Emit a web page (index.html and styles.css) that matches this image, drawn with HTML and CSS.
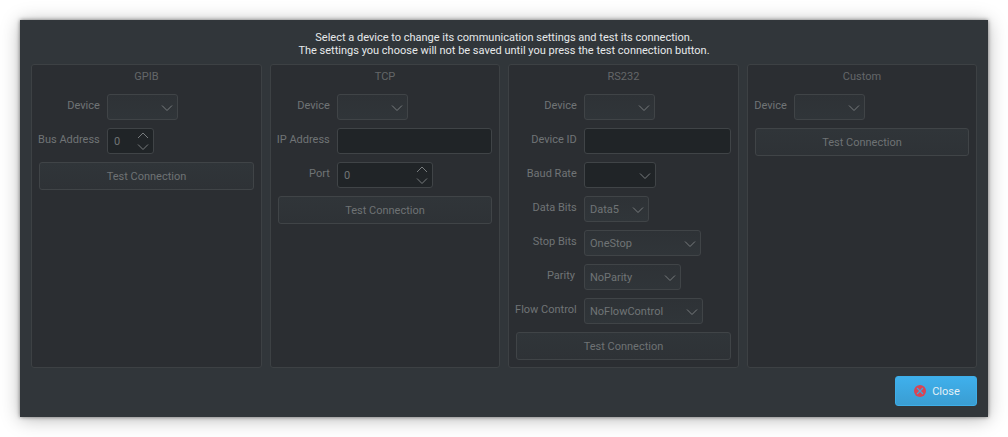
FILE: index.html
```html
<!DOCTYPE html>
<html lang="en">
<head>
<meta charset="utf-8">
<title>Device Communication</title>
<link rel="stylesheet" href="styles.css">
</head>
<body>
<svg class="defs" aria-hidden="true">
  <symbol id="down" viewBox="0 0 12 8"><path d="M1 1.5 6 6.5 11 1.5"/></symbol>
  <symbol id="up" viewBox="0 0 12 8"><path d="M1 6 6 1 11 6"/></symbol>
</svg>
<main class="dialog">
  <p class="intro">Select a device to change its communication settings and test its connection.<br>The settings you choose will not be saved until you press the test connection button.</p>
  <div class="panels">
    <section class="panel gpib">
      <h2 class="title">GPIB</h2>
      <div class="row"><span class="label">Device</span><div class="field combo device"><svg class="chev"><use href="#down"/></svg></div></div>
      <div class="row"><span class="label">Bus Address</span><div class="field spin bus"><span>0</span><span class="arrows"><svg class="chev"><use href="#up"/></svg><svg class="chev"><use href="#down"/></svg></span></div></div>
      <button class="test">Test Connection</button>
    </section>
    <section class="panel tcp">
      <h2 class="title">TCP</h2>
      <div class="row"><span class="label">Device</span><div class="field combo device"><svg class="chev"><use href="#down"/></svg></div></div>
      <div class="row"><span class="label">IP Address</span><div class="field entry"></div></div>
      <div class="row"><span class="label">Port</span><div class="field spin port"><span>0</span><span class="arrows"><svg class="chev"><use href="#up"/></svg><svg class="chev"><use href="#down"/></svg></span></div></div>
      <button class="test">Test Connection</button>
    </section>
    <section class="panel rs232">
      <h2 class="title">RS232</h2>
      <div class="row"><span class="label">Device</span><div class="field combo device"><svg class="chev"><use href="#down"/></svg></div></div>
      <div class="row"><span class="label">Device ID</span><div class="field entry"></div></div>
      <div class="row"><span class="label">Baud Rate</span><div class="field combo baud"><svg class="chev"><use href="#down"/></svg></div></div>
      <div class="row"><span class="label">Data Bits</span><div class="field combo databits"><span>Data5</span><svg class="chev"><use href="#down"/></svg></div></div>
      <div class="row"><span class="label">Stop Bits</span><div class="field combo stopbits"><span>OneStop</span><svg class="chev"><use href="#down"/></svg></div></div>
      <div class="row"><span class="label parity-label">Parity</span><div class="field combo parity"><span>NoParity</span><svg class="chev"><use href="#down"/></svg></div></div>
      <div class="row"><span class="label">Flow Control</span><div class="field combo flow"><span>NoFlowControl</span><svg class="chev"><use href="#down"/></svg></div></div>
      <button class="test">Test Connection</button>
    </section>
    <section class="panel custom">
      <h2 class="title">Custom</h2>
      <div class="row"><span class="label">Device</span><div class="field combo device"><svg class="chev"><use href="#down"/></svg></div></div>
      <button class="test">Test Connection</button>
    </section>
  </div>
  <button class="close"><svg class="close-icon" viewBox="0 0 12 12"><circle cx="6" cy="6" r="6"/><path d="M3 3 9 9M9 3 3 9"/></svg><span>Close</span></button>
</main>
</body>
</html>
```
FILE: styles.css
```css
* { box-sizing: border-box; }
body {
  margin: 0;
  padding: 20px;
  height: 437px;
  overflow: hidden;
  background: #fff;
  font: 11px/13px Roboto, sans-serif;
  color: #707476;
}
.defs { position: absolute; width: 0; height: 0; }
.dialog {
  display: flex;
  flex-direction: column;
  width: 968px;
  height: 397px;
  padding: 11px;
  background: #31363a;
  box-shadow: 0 2px 18px rgba(0, 0, 0, .28), 0 0 4px rgba(0, 0, 0, .5);
}
.intro { margin: 0 0 7px; text-align: center; color: #e6e9ea; }
.panels { display: grid; grid-template-columns: 231px 230px 231px 230px; column-gap: 8px; height: 304px; }
.panel {
  display: flex;
  flex-direction: column;
  gap: 8px;
  padding: 5px 7px;
  border: 1px solid #3d4144;
  border-radius: 3px;
  background: #2b2e32;
}
.tcp { --label: 59px; }
.gpib, .rs232 { --label: 68px; }
.custom { --label: 39px; }
.title { margin: 0 0 3px; font: inherit; text-align: center; color: #646769; }
.row { display: flex; height: 26px; }
.label {
  flex: none;
  display: flex;
  justify-content: flex-end;
  width: calc(var(--label) - 7.2px);
  margin-right: 7.2px;
  padding-top: 5px;
  white-space: nowrap;
}
.parity-label { padding-right: 1.8px; }
.field {
  display: flex;
  align-items: center;
  justify-content: space-between;
  height: 26px;
  padding: 1px 4px 0 5px;
  border: 1px solid #404447;
  border-radius: 3px;
  background: #202427;
}
.combo { background: linear-gradient(#2e3236, #303539); }
.combo > .chev { margin-left: auto; }
.baud { background: #202427; }
.entry { flex: 1; }
.device { width: 71px; }
.bus { width: 47px; }
.port { width: 96px; }
.baud { width: 72px; }
.databits { width: 65px; }
.stopbits { width: 117px; }
.parity { width: 97px; }
.flow { width: 119px; }
.arrows { display: flex; flex-direction: column; gap: 3px; }
.spin { padding-left: 6px; padding-right: 4px; padding-top: 0; }
.chev { display: block; width: 12px; height: 8px; fill: none; stroke: #787c7e; stroke-width: 1; }
.test {
  height: 28px;
  padding: 0;
  border: 1px solid #404447;
  border-radius: 3px;
  background: linear-gradient(#303539, #2e3236);
  font: inherit;
  color: #6e7274;
}
.close {
  display: flex;
  align-items: center;
  justify-content: center;
  gap: 6px;
  align-self: flex-end;
  width: 82px;
  height: 30px;
  margin-top: 8px;
  padding: 0 0 0 2px;
  border: 1px solid #3daee9;
  border-radius: 3px;
  background: linear-gradient(#3fb0ec, #3a9dd2);
  font: inherit;
  color: #e4f0f6;
}
.close-icon { width: 12px; height: 12px; fill: #da4453; }
.close-icon path { fill: none; stroke: #3ca6df; stroke-width: 1.2; }
```
